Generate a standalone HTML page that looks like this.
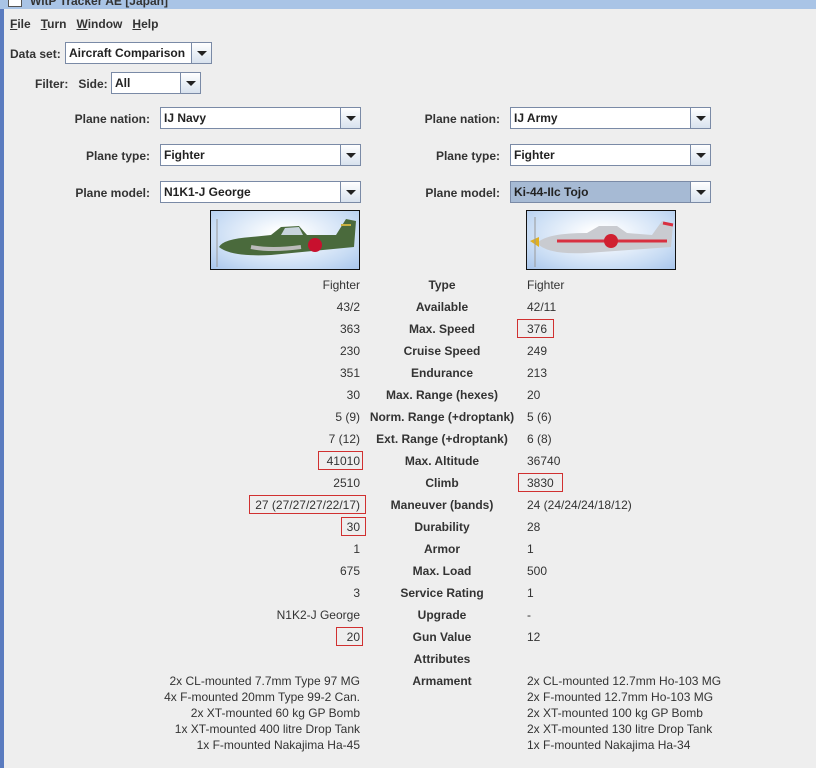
<!DOCTYPE html>
<html><head><style>
*{margin:0;padding:0;box-sizing:border-box}
body{width:816px;height:768px;background:#eeeeee;position:relative;overflow:hidden;font-family:"Liberation Sans",sans-serif;font-size:12px;color:#333}
.a{position:absolute;white-space:nowrap;line-height:14px}
.b{font-weight:bold;color:#333}
.r{text-align:right}
.c{text-align:center}
.cb{position:absolute;height:22px;border:1px solid #7a8aa6;background:#fff;font-weight:bold;font-size:12px;line-height:20px;padding-left:3px;color:#222}
.cb i{position:absolute;right:0;top:0;width:20px;height:20px;border-left:1px solid #7a8aa6;background:linear-gradient(#fff,#d8e2ee)}
.cb i:after{content:"";position:absolute;left:5px;top:8px;border-left:5px solid transparent;border-right:5px solid transparent;border-top:5px solid #222}
.box{position:absolute;border:1px solid #d03030;height:19px}
.pic{position:absolute;width:150px;height:60px;border:1px solid #111;background:radial-gradient(ellipse at 50% 40%,#fff 10%,#c8dcf4 70%,#a9c6ec)}
</style></head><body>
<div style="position:absolute;left:0;top:0;width:816px;height:9px;background:#a9c4e6"></div>
<div style="position:absolute;left:8px;top:-6px;width:14px;height:13px;background:#fff;border:1px solid #555"></div>
<div class="a b" style="left:30px;top:-6px;color:#333">WitP Tracker AE [Japan]</div>
<div style="position:absolute;left:0;top:9px;width:4px;height:759px;background:#5a7bbf"></div>
<div class="a b" style="left:10px;top:17px"><u>F</u>ile&nbsp;&nbsp;&nbsp;<u>T</u>urn&nbsp;&nbsp;&nbsp;<u>W</u>indow&nbsp;&nbsp;&nbsp;<u>H</u>elp</div>
<div class="a b" style="left:10px;top:47px">Data set:</div>
<div class="cb" style="left:65px;top:42px;width:147px">Aircraft Comparison<i></i></div>
<div class="a b" style="left:35px;top:77px">Filter:&nbsp;&nbsp;&nbsp;Side:</div>
<div class="cb" style="left:111px;top:72px;width:90px">All<i></i></div>

<div class="a b r" style="left:40px;width:110px;top:112px">Plane nation:</div>
<div class="cb" style="left:160px;top:107px;width:201px">IJ Navy<i></i></div>
<div class="a b r" style="left:40px;width:110px;top:149px">Plane type:</div>
<div class="cb" style="left:160px;top:144px;width:201px">Fighter<i></i></div>
<div class="a b r" style="left:40px;width:110px;top:186px">Plane model:</div>
<div class="cb" style="left:160px;top:181px;width:201px">N1K1-J George<i></i></div>

<div class="a b r" style="left:390px;width:110px;top:112px">Plane nation:</div>
<div class="cb" style="left:510px;top:107px;width:201px">IJ Army<i></i></div>
<div class="a b r" style="left:390px;width:110px;top:149px">Plane type:</div>
<div class="cb" style="left:510px;top:144px;width:201px">Fighter<i></i></div>
<div class="a b r" style="left:390px;width:110px;top:186px">Plane model:</div>
<div class="cb" style="left:510px;top:181px;width:201px;background:#a6bad4">Ki-44-IIc Tojo<i></i></div>

<div class="pic" style="left:210px;top:210px"><svg width="148" height="58"><path d="M8 36 Q12 28 40 26 L60 24 L70 16 L88 15 L96 24 L125 24 L135 8 L145 10 L143 36 L60 44 Q20 46 8 36Z" fill="#4a6a3c"/><path d="M70 24 L74 17 L88 16 L92 24Z" fill="#c8d4dc"/><circle cx="104" cy="34" r="7" fill="#c8102e"/><path d="M40 36 Q60 40 90 36" stroke="#bbb" stroke-width="4" fill="none"/><path d="M130 14 L140 14" stroke="#c8b040" stroke-width="2"/><path d="M6 8 L6 56" stroke="#999" stroke-width="1"/></svg></div>
<div class="pic" style="left:526px;top:210px"><svg width="148" height="58"><path d="M10 32 Q20 22 60 22 L72 15 L90 15 L100 22 L125 24 L135 10 L146 14 L144 36 L60 42 Q20 44 10 32Z" fill="#c9cbd0"/><path d="M30 30 L140 30" stroke="#d83040" stroke-width="3"/><path d="M136 12 L146 14" stroke="#d83040" stroke-width="3"/><circle cx="84" cy="30" r="7" fill="#d02030"/><path d="M3 30 L12 26 L12 36Z" fill="#e0b020"/><path d="M8 6 L8 56" stroke="#999" stroke-width="1"/></svg></div>

<div id="t"></div>
<script>
var rows=[["Fighter","Type","Fighter"],["43/2","Available","42/11"],["363","Max. Speed","376"],["230","Cruise Speed","249"],["351","Endurance","213"],["30","Max. Range (hexes)","20"],["5 (9)","Norm. Range (+droptank)","5 (6)"],["7 (12)","Ext. Range (+droptank)","6 (8)"],["41010","Max. Altitude","36740"],["2510","Climb","3830"],["27 (27/27/27/22/17)","Maneuver (bands)","24 (24/24/24/18/12)"],["30","Durability","28"],["1","Armor","1"],["675","Max. Load","500"],["3","Service Rating","1"],["N1K2-J George","Upgrade","-"],["20","Gun Value","12"],["","Attributes",""]];
var boxL={8:[318,363],10:[249,366],11:[341,366],16:[336,363]},boxR={2:[517,554],9:[518,563]};
var h="";
rows.forEach(function(r,i){var y=278+i*22;
h+='<div class="a r" style="left:100px;width:260px;top:'+y+'px">'+r[0]+'</div>';
h+='<div class="a b c" style="left:342px;width:200px;top:'+y+'px">'+r[1]+'</div>';
h+='<div class="a" style="left:527px;top:'+y+'px">'+r[2]+'</div>';
if(boxL[i])h+='<div class="box" style="left:'+boxL[i][0]+'px;width:'+(boxL[i][1]-boxL[i][0])+'px;top:'+(y-3)+'px"></div>';
if(boxR[i])h+='<div class="box" style="left:'+boxR[i][0]+'px;width:'+(boxR[i][1]-boxR[i][0])+'px;top:'+(y-3)+'px"></div>';
});
var L=["2x CL-mounted 7.7mm Type 97 MG","4x F-mounted 20mm Type 99-2 Can.","2x XT-mounted 60 kg GP Bomb","1x XT-mounted 400 litre Drop Tank","1x F-mounted Nakajima Ha-45"];
var R=["2x CL-mounted 12.7mm Ho-103 MG","2x F-mounted 12.7mm Ho-103 MG","2x XT-mounted 100 kg GP Bomb","2x XT-mounted 130 litre Drop Tank","1x F-mounted Nakajima Ha-34"];
h+='<div class="a b c" style="left:342px;width:200px;top:674px">Armament</div>';
for(var i=0;i<5;i++){var y=674+i*16;
h+='<div class="a r" style="left:60px;width:300px;top:'+y+'px">'+L[i]+'</div>';
h+='<div class="a" style="left:527px;top:'+y+'px">'+R[i]+'</div>';}
document.getElementById("t").innerHTML=h;
</script>
</body></html>
